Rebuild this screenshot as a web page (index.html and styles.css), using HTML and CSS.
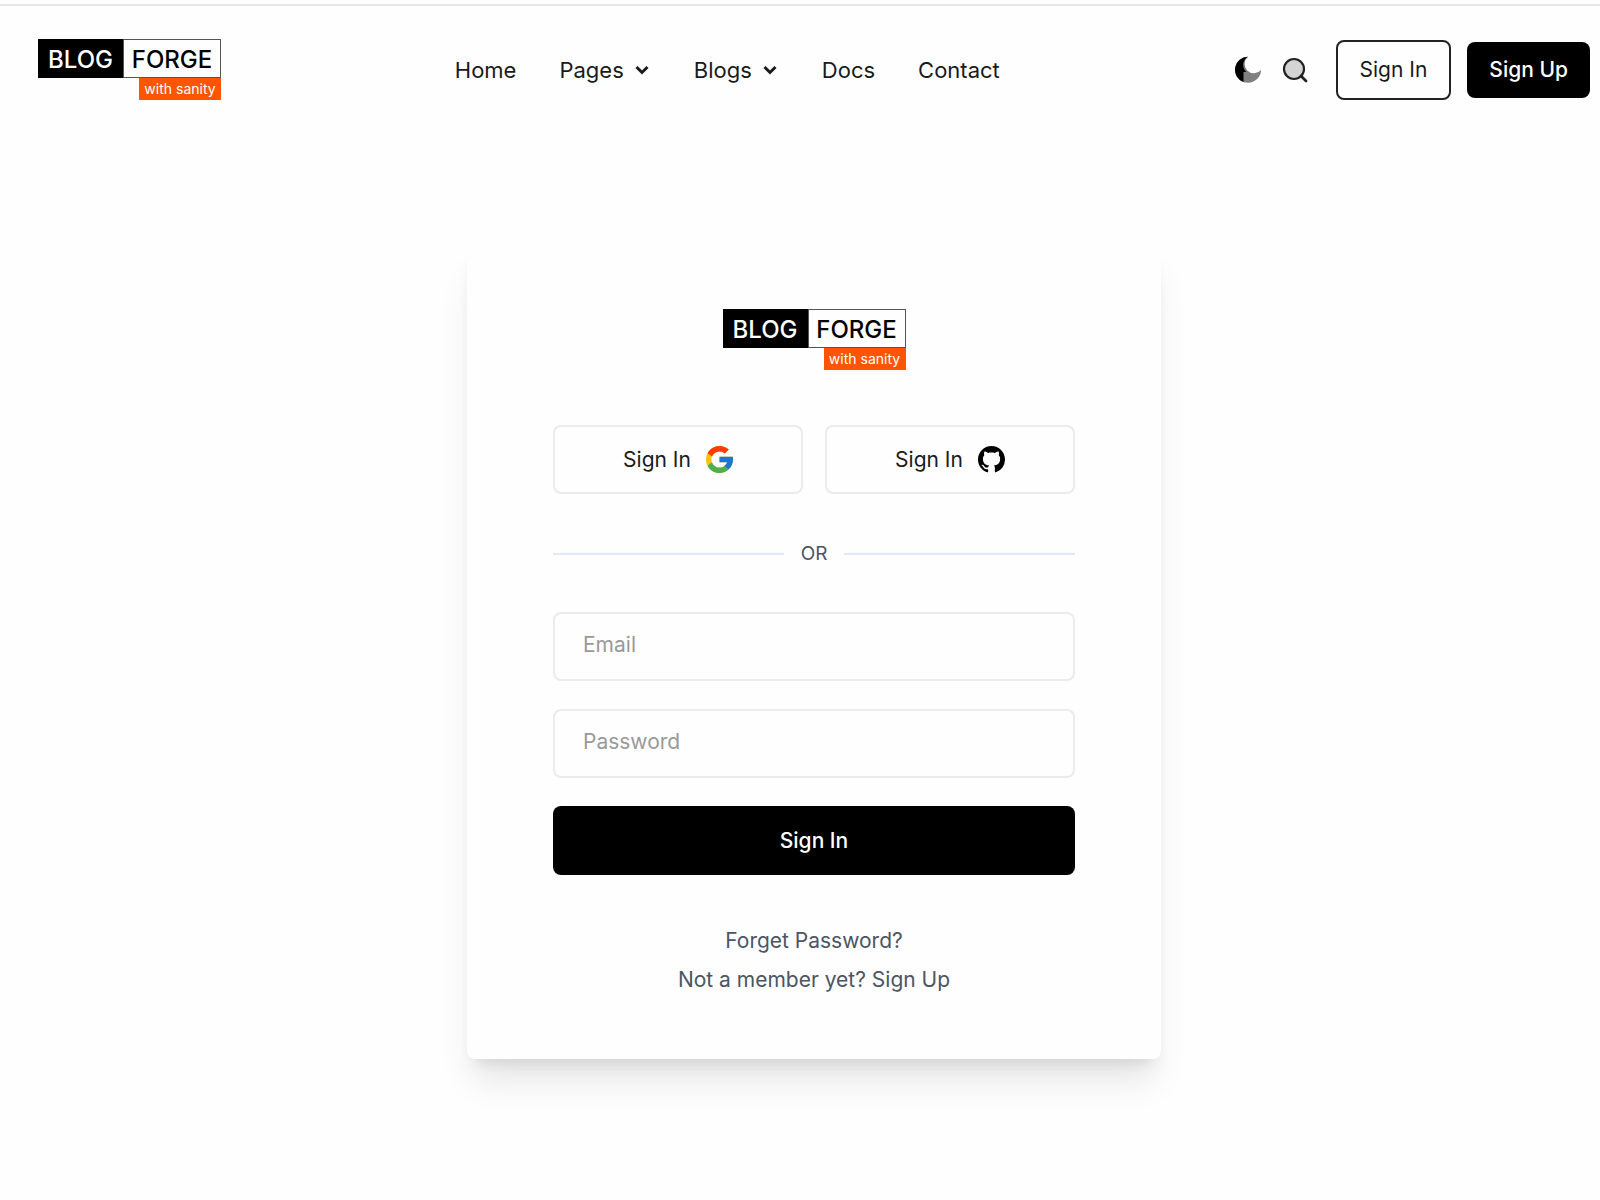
FILE: index.html
```html
<!DOCTYPE html>
<html lang="en">

<head>
    <meta charset="UTF-8">
    <meta name="viewport" content="width=device-width, initial-scale=1.0">
    <title>Sign In - Blog Forge</title>
    <link rel="stylesheet" href="styles.css">
</head>

<body>
    <header class="header">
        <a href="#" class="logo">
            <span class="logo-blog">BLOG</span>
            <span class="logo-forge">FORGE</span>
            <span class="logo-sanity">with sanity</span>
        </a>

        <nav class="menu">
            <a href="#">Home</a>
            <a href="#">Pages
                <svg class="chevron" viewBox="0 0 18 18"><path d="M3.500 6l5.500 5.500L14.500 6" /></svg>
            </a>
            <a href="#">Blogs
                <svg class="chevron" viewBox="0 0 18 18"><path d="M3.500 6l5.500 5.500L14.500 6" /></svg>
            </a>
            <a href="#">Docs</a>
            <a href="#">Contact</a>
        </nav>

        <div class="actions">
            <button class="icon-button" aria-label="Dark mode">
                <svg class="moon" viewBox="0 0 28 28">
                    <path d="M14 .800A13 13 0 1 0 27 14A9.300 9.300 0 1 1 14 .800Z" fill="#808080" />
                    <path d="M14 .800A13 13 0 0 0 9.500 26V16H12.500A9.300 9.300 0 0 1 14 .800Z" fill="#000" />
                </svg>
            </button>
            <button class="icon-button" aria-label="Search">
                <svg class="search" viewBox="0 0 26 26">
                    <circle cx="12" cy="12" r="10" fill="#d4d4d4" stroke="#222" stroke-width="2.200" />
                    <path d="M19 19l5 5" stroke="#222" stroke-width="2.800" stroke-linecap="round" />
                </svg>
            </button>
            <a href="#" class="button-outline">Sign In</a>
            <a href="#" class="button-solid">Sign Up</a>
        </div>
    </header>

    <main class="content">
        <div class="card">
            <a href="#" class="logo">
                <span class="logo-blog">BLOG</span>
                <span class="logo-forge">FORGE</span>
                <span class="logo-sanity">with sanity</span>
            </a>

            <div class="social">
                <button>Sign In
                    <svg class="social-icon" viewBox="4 4 40 40">
                        <path fill="#ffc107" d="M43.600 20H24v8h11.300C33.700 32.700 29.200 36 24 36c-6.600 0-12-5.400-12-12s5.400-12 12-12c3.100 0 5.800 1.200 8 3l5.700-5.700C34 6.100 29.300 4 24 4 13 4 4 13 4 24s9 20 20 20 20-9 20-20c0-1.300-.1-2.700-.4-4z" />
                        <path fill="#ff3d00" d="M6.300 14.700l6.600 4.800C14.700 15.100 19 12 24 12c3.100 0 5.800 1.200 8 3l5.700-5.700C34 6.100 29.300 4 24 4 16.300 4 9.700 8.300 6.300 14.700z" />
                        <path fill="#4caf50" d="M24 44c5.200 0 9.900-2 13.400-5.200l-6.200-5.200C29.200 35.100 26.700 36 24 36c-5.200 0-9.600-3.300-11.300-7.900l-6.500 5C9.500 39.600 16.200 44 24 44z" />
                        <path fill="#1976d2" d="M43.600 20H24v8h11.300c-.8 2.200-2.200 4.200-4.100 5.600l6.200 5.200C37 39.200 44 34 44 24c0-1.300-.1-2.700-.4-4z" />
                    </svg>
                </button>
                <button>Sign In
                    <svg class="social-icon" viewBox="0 0 16 16">
                        <path d="M8 0C3.580 0 0 3.580 0 8c0 3.540 2.290 6.530 5.470 7.590.4.070.55-.17.55-.38 0-.19-.01-.82-.01-1.490-2.010.37-2.530-.49-2.690-.94-.09-.23-.48-.94-.82-1.130-.28-.15-.68-.52-.01-.53.63-.01 1.080.58 1.230.82.72 1.210 1.870.87 2.330.66.07-.52.28-.87.51-1.070-1.780-.2-3.640-.89-3.640-3.950 0-.87.31-1.590.82-2.150-.08-.2-.36-1.020.08-2.120 0 0 .67-.21 2.200.82.64-.18 1.320-.27 2-.27s1.360.09 2 .27c1.530-1.040 2.200-.82 2.200-.82.44 1.100.16 1.920.08 2.120.51.56.82 1.270.82 2.150 0 3.070-1.870 3.750-3.650 3.950.29.25.54.73.54 1.480 0 1.070-.01 1.930-.01 2.200 0 .21.15.46.55.38A8.010 8.010 0 0 0 16 8c0-4.420-3.580-8-8-8z" />
                    </svg>
                </button>
            </div>

            <div class="divider">OR</div>

            <form class="form">
                <input type="email" placeholder="Email" aria-label="Email">
                <input type="password" placeholder="Password" aria-label="Password">
                <button type="submit">Sign In</button>
            </form>

            <div class="links">
                <a href="#">Forget Password?</a>
                <p>Not a member yet? <a href="#">Sign Up</a></p>
            </div>
        </div>
    </main>
</body>

</html>
```

FILE: styles.css
```css
* {
    box-sizing: border-box;
}

body {
    margin: 0;
    padding-top: 4px;
    background-color: #fefefe;
    color: #1a1a1a;
    font-family: Inter, "Liberation Sans", sans-serif;
    font-size: 21px;
}

a {
    color: inherit;
    text-decoration: none;
}

button,
input {
    font: inherit;
    color: inherit;
}

button {
    cursor: pointer;
}

.header {
    display: flex;
    justify-content: space-between;
    align-items: center;
    padding: 33px 10px 32px 38px;
    border-top: 2px solid #e5e5e5;
}

/* logo */
.logo {
    display: grid;
    grid-template-columns: 85px 98px;
    grid-template-rows: 39px 22px;
    font-size: 24px;
    font-weight: 500;
}

.logo-blog,
.logo-forge {
    display: flex;
    justify-content: center;
    align-items: center;
    padding-top: 2px;
    border: 1px solid #000;
}

.logo-blog {
    background-color: #000;
    color: #fff;
}

.logo-forge {
    border-color: #555;
    color: #000;
}

.logo-sanity {
    grid-column: 2;
    justify-self: end;
    width: 82px;
    background-color: #ff5500;
    color: #fff;
    font-size: 14px;
    font-weight: 400;
    line-height: 22px;
    text-align: center;
}

/* menu */
.menu {
    display: flex;
    gap: 43px;
    font-size: 22px;
}

.menu a {
    display: flex;
    align-items: center;
    gap: 9px;
}

.chevron {
    width: 18px;
    height: 18px;
    fill: none;
    stroke: #1a1a1a;
    stroke-width: 3;
}

.actions {
    display: flex;
    align-items: center;
}

.icon-button {
    display: flex;
    margin-right: 20px;
    padding: 0;
    border: 0;
    background: none;
}

.moon {
    width: 28px;
    height: 28px;
}

.search {
    width: 26px;
    height: 26px;
}

.button-outline,
.button-solid {
    border-radius: 8px;
    line-height: 28px;
}

.button-outline {
    margin: 0 16px 0 8px;
    padding: 14px 22px;
    border: 2px solid #222;
}

.button-solid {
    padding: 14px 22px;
    background-color: #000;
    color: #fff;
    font-weight: 500;
}

/* sign in card */
.content {
    display: flex;
    justify-content: center;
    padding: 111px 0 60px 28px;
}

.card {
    display: flex;
    flex-direction: column;
    align-items: center;
    width: 694px;
    max-width: 100%;
    padding: 66px 86px 60px;
    border-radius: 8px;
    background-color: #fefefe;
    box-shadow: 0 28px 34px -7px rgba(0, 0, 0, 0.1), 0 11px 14px -8px rgba(0, 0, 0, 0.1);
}

.social {
    display: grid;
    grid-template-columns: 1fr 1fr;
    gap: 22px;
    width: 100%;
    margin-top: 55px;
}

.social button {
    display: flex;
    justify-content: center;
    align-items: center;
    gap: 15px;
    height: 69px;
    border: 2px solid #ebebeb;
    border-radius: 8px;
    background-color: #fefefe;
}

.social-icon {
    width: 27px;
    height: 27px;
}

.divider {
    display: flex;
    align-items: center;
    gap: 17px;
    width: 100%;
    margin: 46px 0 44px;
    color: #4b5563;
    font-size: 19px;
    line-height: 28px;
}

.divider::before,
.divider::after {
    content: "";
    flex: 1;
    height: 2px;
    background-color: #e0e8fa;
}

.form {
    display: flex;
    flex-direction: column;
    gap: 28px;
    width: 100%;
}

.form input {
    height: 69px;
    padding: 0 28px 4px;
    border: 2px solid #ebebeb;
    border-radius: 8px;
    background-color: #fefefe;
}

.form input::placeholder {
    color: #999;
}

.form button {
    height: 69px;
    border: 0;
    border-radius: 8px;
    background-color: #000;
    color: #fff;
    font-weight: 500;
}

.links {
    margin-top: 46px;
    color: #4b5563;
    line-height: 39px;
    text-align: center;
}

.links p {
    margin: 0;
}
```
